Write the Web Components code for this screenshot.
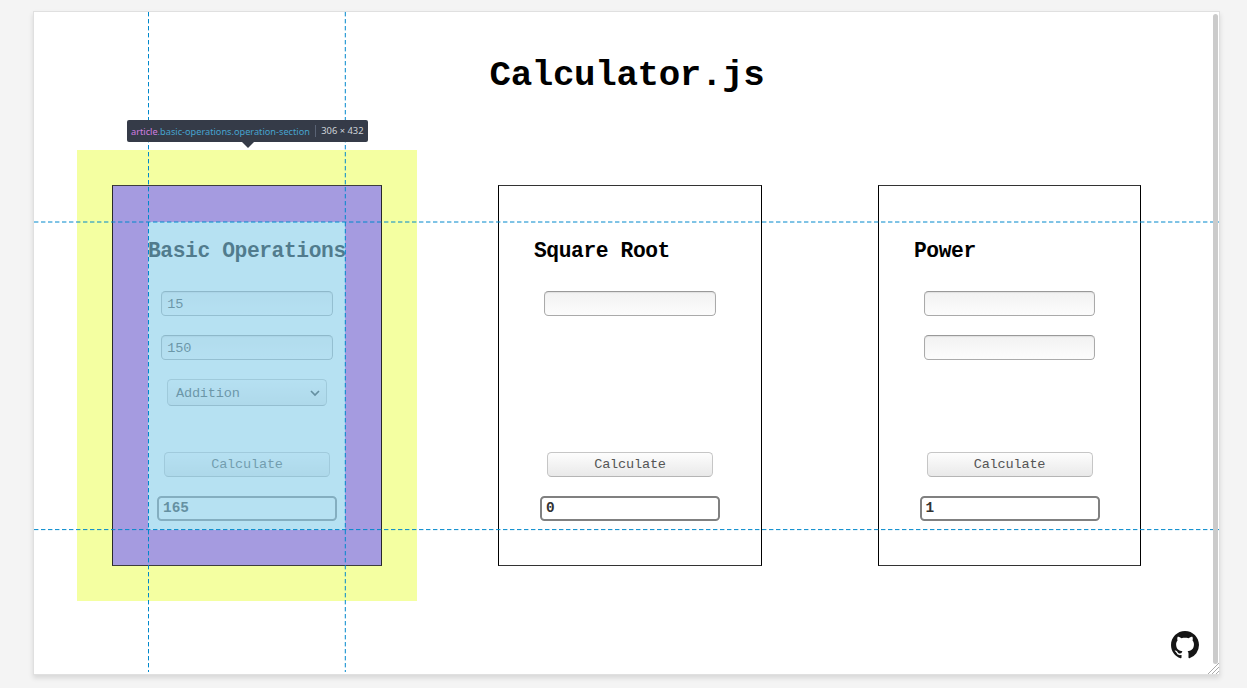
<!DOCTYPE html>
<html lang="en"><head><meta charset="utf-8"><title>Calculator.js</title>
<style>html,body{margin:0;height:100%}body{background:#f4f4f4;overflow:hidden;font-family:"Liberation Mono",monospace}</style></head><body>
<calculator-app></calculator-app>
<script>
const define=(name,html)=>customElements.define(name,class extends HTMLElement{
  constructor(){super();this.attachShadow({mode:'open'}).innerHTML=html;}
});

define('page-title',`<style>:host{display:block;text-align:center;color:#000}h1{margin:0;font-size:35.8px;letter-spacing:-.33px;line-height:40px;font-weight:700}</style><h1><slot></slot></h1>`);

define('number-field',`<style>:host{display:block;width:171.5px;height:25px}
.box{box-sizing:border-box;height:25px;border:1px solid #aaa;border-top-color:#999;border-radius:4.5px;padding:1px 5px 0;background:linear-gradient(#f2f2f2,#fcfcfc);box-shadow:inset 0 1px 1px #e0e0e0;font-size:13.6px;letter-spacing:-.2px;line-height:23px;color:#444}</style><div class="box"><slot></slot></div>`);

define('operation-select',`<style>:host{display:block;width:160px;height:27px}
.box{box-sizing:border-box;height:27px;border:1px solid #c4c4c4;border-bottom-color:#a8a8a8;border-radius:4.5px;padding:1px 6px 0 8px;background:linear-gradient(#fdfdfd,#ebebeb);font-size:13.6px;letter-spacing:-.2px;color:#444;display:flex;align-items:center;justify-content:space-between}svg{display:block}</style>
<div class="box"><slot></slot><svg width="10" height="8" viewBox="0 0 10 8"><path d="M1 2l4 4 4-4" fill="none" stroke="#333" stroke-width="1.7"/></svg></div>`);

define('action-button',`<style>:host{display:block;width:166px;height:25px}
button{display:block;width:100%;height:25px;box-sizing:border-box;border:1px solid #c6c6c6;border-bottom-color:#b5b5b5;border-radius:4.5px;background:linear-gradient(#fdfdfd,#e9e9e9);padding:0;font:13.6px "Liberation Mono",monospace;letter-spacing:-.2px;color:#555}</style><button><slot></slot></button>`);

define('result-field',`<style>:host{display:block;width:180px;height:25px}
.box{box-sizing:border-box;height:25px;border:2px solid #808080;border-radius:4.5px;padding:0 4px;background:#fff;font-weight:700;font-size:14.4px;line-height:21px;color:#333}</style><div class="box"><slot></slot></div>`);

define('operation-section',`<style>:host{display:block}
article{box-sizing:border-box;height:381px;border:1px solid #000;border-top-color:#333;border-bottom-color:#333;padding:35px;display:flex;flex-direction:column;align-items:center}
h2{align-self:flex-start;margin:17px 0 0;font-size:21.3px;letter-spacing:-.42px;line-height:26px;height:26px;white-space:nowrap;color:#000}
.inputs{display:flex;flex-direction:column;align-items:center;gap:19px;margin-top:27px;height:140px}
.out{display:flex;flex-direction:column;align-items:center;gap:19px;margin-top:20.5px}</style>
<article><h2><slot name="title"></slot></h2><div class="inputs"><slot></slot></div><div class="out"><action-button>Calculate</action-button><result-field><slot name="result"></slot></result-field></div></article>`);

define('github-link',`<style>:host{display:block;width:28px;height:28px}svg{display:block}</style>
<svg width="28" height="28" viewBox="0 0 16 16"><path fill="#151515" fill-rule="evenodd" d="M8 0C3.58 0 0 3.58 0 8c0 3.54 2.29 6.53 5.47 7.59.4.07.55-.17.55-.38 0-.19-.01-.82-.01-1.49-2.01.37-2.53-.49-2.69-.94-.09-.23-.48-.94-.82-1.13-.28-.15-.68-.52-.01-.53.63-.01 1.08.58 1.23.82.72 1.21 1.87.87 2.33.66.07-.52.28-.87.51-1.07-1.78-.2-3.64-.89-3.64-3.95 0-.87.31-1.59.82-2.15-.08-.2-.36-1.02.08-2.12 0 0 .67-.21 2.2.82.64-.18 1.32-.27 2-.27s1.36.09 2 .27c1.53-1.04 2.2-.82 2.2-.82.44 1.1.16 1.92.08 2.12.51.56.82 1.27.82 2.15 0 3.07-1.87 3.75-3.65 3.95.29.25.54.73.54 1.48 0 1.07-.01 1.93-.01 2.2 0 .21.15.46.55.38A8.01 8.01 0 0 0 16 8c0-4.42-3.58-8-8-8z"/></svg>`);

define('node-infobar',`<style>:host{display:flex;position:absolute;left:93px;top:108.4px;width:240.5px;height:21.6px;box-sizing:border-box;background:#353b48;border-radius:2px;align-items:center;padding:0 4px;font:9.2px "Noto Sans",sans-serif;white-space:nowrap;justify-content:space-between}
:host::after{content:"";position:absolute;left:114.5px;top:21.4px;border:6.5px solid transparent;border-top-color:#353b48;border-bottom:0}
.tag{color:#d17ee0}.cls{color:#46a3cf}.size{color:#ced3d9;border-left:1px solid #5a6375;padding-left:5px;line-height:12px;font-size:9.35px}</style>
<span><span class="tag">article</span><span class="cls">.basic-operations.operation-section</span></span><span class="size">306 × 432</span>`);

define('box-highlighter',`<style>:host{display:block;position:absolute;inset:0;overflow:hidden;pointer-events:none}
.margin,.border,.padding,.content{box-sizing:border-box;height:100%;border-style:solid}
.region{position:absolute;left:43px;top:138px;width:340px;height:451px;opacity:.6}
.margin{border:35px solid #edff64}.border{border:1px solid #444}.padding{border:solid #6a5acd;border-width:36px 36px 35px 35px}.content{border:0;background:#87ceeb}
svg{position:absolute;left:0;top:0}path{fill:none;stroke:#0088cc;stroke-width:1;stroke-dasharray:4.4 2.6}</style>
<div class="region"><div class="margin"><div class="border"><div class="padding"><div class="content"></div></div></div></div></div>
<svg width="1186" height="662"><path d="M114.5 0V660M311.3 0V660"/><path d="M0 210H1186M0 517.6H1186"/></svg>
<node-infobar></node-infobar>`);

define('calculator-app',`<style>
:host{display:block;padding:11px 27px 13px 33px;height:688px;box-sizing:border-box}
.viewport{position:relative;box-sizing:border-box;height:664px;background:#fff;border:1px solid #e0e0e0;box-shadow:0 3px 5px rgba(0,0,0,.12);display:grid;grid-template-rows:44px 40px 89px 381px 1fr}
page-title{grid-row:2;padding-left:1px}
main{grid-row:4;display:grid;grid-template-columns:270px 264px 263px;column-gap:116px;padding-left:78px}
footer{grid-row:5;display:flex;justify-content:flex-end;align-items:end;padding:0 20px 15px 0}
.scroll{position:absolute;right:1.5px;top:2px;width:5px;height:650px;border-radius:3px;background:#cbcbcb}
.grip{position:absolute;right:0;bottom:0}</style>
<div class="viewport"><page-title>Calculator.js</page-title>
<main>
<operation-section><span slot="title">Basic Operations</span><number-field>15</number-field><number-field>150</number-field><operation-select>Addition</operation-select><span slot="result">165</span></operation-section>
<operation-section><span slot="title">Square Root</span><number-field></number-field><span slot="result">0</span></operation-section>
<operation-section><span slot="title">Power</span><number-field></number-field><number-field></number-field><span slot="result">1</span></operation-section>
</main><footer><github-link></github-link></footer>
<box-highlighter></box-highlighter><div class="scroll"></div>
<svg class="grip" width="12" height="12"><path d="M1 12L12 1M5 12L12 5M9 12L12 9" stroke="#aaa" stroke-width="1"/></svg></div>`);
</script></body></html>
